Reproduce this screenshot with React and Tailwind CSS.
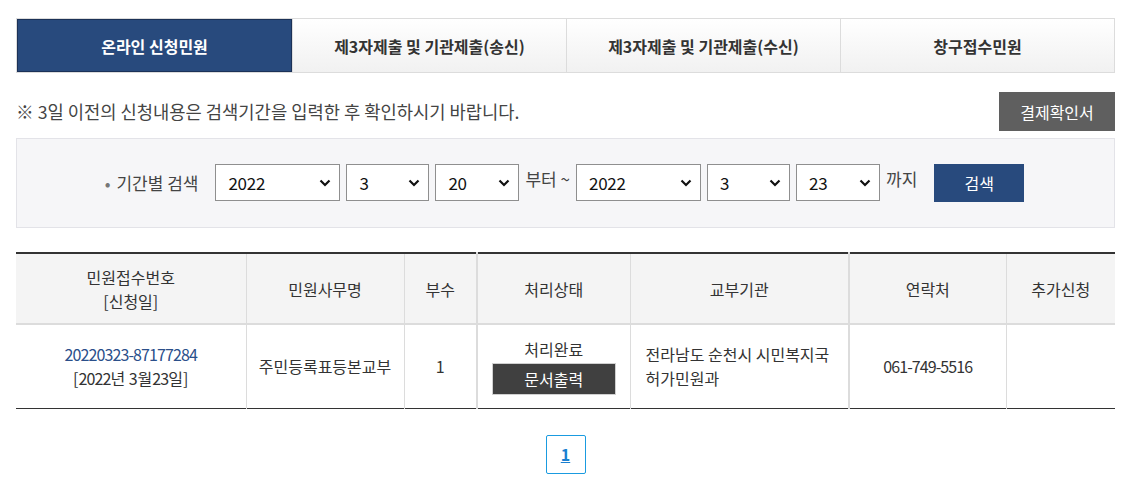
import { useState } from 'react';

const font = { fontFamily: '"Noto Sans CJK KR", "Noto Sans", sans-serif' };

const tabs = ['온라인 신청민원', '제3자제출 및 기관제출(송신)', '제3자제출 및 기관제출(수신)', '창구접수민원'];

const Chevron = () => (
  <svg className="pointer-events-none absolute right-[9px] top-1/2 -translate-y-1/2" width="12" height="8" viewBox="0 0 12 8">
    <path d="M1.5 1.5 L6 6 L10.5 1.5" fill="none" stroke="#111" strokeWidth="2.2" />
  </svg>
);

const DateSelect = ({ value, options, width }) => (
  <div className={`relative ${width}`}>
    <select
      defaultValue={value}
      className="h-[37px] w-full appearance-none border border-[#8f8f8f] bg-white pl-[12px] text-[17px] tracking-[-0.3px] text-[#111] outline-none"
    >
      {options.map((o) => (
        <option key={o}>{o}</option>
      ))}
    </select>
    <Chevron />
  </div>
);

const years = ['2020', '2021', '2022'];
const months = Array.from({ length: 12 }, (_, i) => String(i + 1));
const days = Array.from({ length: 31 }, (_, i) => String(i + 1));

export default function App() {
  const [active, setActive] = useState(0);

  return (
    <div className="min-h-[502px] w-[1141px] bg-white text-[#333]" style={font}>
      <div className="pl-[16px] pr-[26px] pt-[18px]">
        {/* Tabs */}
        <div className="flex h-[55px] border border-[#dcdcdc]">
          {tabs.map((t, i) => (
            <button
              key={t}
              onClick={() => setActive(i)}
              className={
                i === active
                  ? 'flex-1 border border-[#1b3157] bg-[#284a7d] text-[16px] font-bold text-white'
                  : 'flex-1 border-l border-[#dcdcdc] bg-gradient-to-b from-white to-[#f1f1f1] text-[16px] font-bold text-[#333]'
              }
            >
              {t}
            </button>
          ))}
        </div>

        {/* Notice */}
        <div className="mt-[19px] flex items-center justify-between">
          <p className="text-[17.7px] text-[#444]">※ 3일 이전의 신청내용은 검색기간을 입력한 후 확인하시기 바랍니다.</p>
          <button className="h-[39px] w-[116px] bg-[#5f5f5f] text-[16px] text-white">결제확인서</button>
        </div>

        {/* Search box */}
        <div className="mt-[7px] flex h-[90px] items-center justify-center border border-[#e3e3e8] bg-[#f6f6f8] pr-[2px]">
          <span className="mr-[17px] text-[17px] text-[#444]">
            <span className="mr-[6px] text-[#777]">•</span>기간별 검색
          </span>
          <div className="flex items-start gap-[6px]">
            <DateSelect value="2022" options={years} width="w-[125px]" />
            <DateSelect value="3" options={months} width="w-[83px]" />
            <DateSelect value="20" options={days} width="w-[84px]" />
            <span className="text-[17px] leading-[30px] text-[#444]">부터 ~</span>
            <DateSelect value="2022" options={years} width="w-[125px]" />
            <DateSelect value="3" options={months} width="w-[83px]" />
            <DateSelect value="23" options={days} width="w-[84px]" />
            <span className="text-[17px] leading-[30px] text-[#444]">까지</span>
            <button className="ml-[11px] h-[38px] w-[90px] bg-[#284a7d] text-[16px] text-white">검색</button>
          </div>
        </div>

        {/* Table */}
        <table className="mt-[24px] w-full border-collapse border-t-2 border-b border-t-[#333] border-b-[#333] text-[16px]">
          <thead>
            <tr className="h-[71px] border-b-2 border-[#dcdcdc] bg-[#f4f4f4]">
              <th className="w-[230px] font-normal leading-[24px]">
                민원접수번호
                <br />
                [신청일]
              </th>
              <th className="w-[158px] border-l border-[#dcdcdc] font-normal">민원사무명</th>
              <th className="w-[73px] border-l border-[#dcdcdc] font-normal">부수</th>
              <th className="w-[153px] border-l-2 border-[#dcdcdc] font-normal">처리상태</th>
              <th className="w-[219px] border-l border-[#dcdcdc] font-normal">교부기관</th>
              <th className="w-[157px] border-l-2 border-[#dcdcdc] font-normal">연락처</th>
              <th className="border-l border-[#dcdcdc] font-normal">추가신청</th>
            </tr>
          </thead>
          <tbody>
            <tr className="h-[84px]">
              <td className="text-center leading-[24px]">
                <a className="tracking-[-0.9px] text-[#2b4f8a]">20220323-87177284</a>
                <br />
                [<span className="tracking-[-0.9px]">2022</span>년 3월<span className="tracking-[-0.9px]">23</span>일]
              </td>
              <td className="border-l border-[#dcdcdc] text-center">주민등록표등본교부</td>
              <td className="border-l border-[#dcdcdc] text-center">1</td>
              <td className="border-l-2 border-[#dcdcdc] text-center">
                <div className="leading-[22px]">처리완료</div>
                <button className="mt-[3px] h-[32px] w-[124px] border border-[#d0d0d0] bg-[#404040] text-white">문서출력</button>
              </td>
              <td className="border-l border-[#dcdcdc] pl-[15px] text-left leading-[24px]">
                전라남도 순천시 시민복지국
                <br />
                허가민원과
              </td>
              <td className="border-l-2 border-[#dcdcdc] text-center tracking-[-0.9px]">061-749-5516</td>
              <td className="border-l border-[#dcdcdc]"></td>
            </tr>
          </tbody>
        </table>

        {/* Pagination */}
        <div className="mt-[26px] flex justify-center">
          <a className="flex h-[39px] w-[40px] items-center justify-center rounded-[2px] border border-[#1a9be0] text-[16px] font-bold text-[#1a7fd0] underline">
            1
          </a>
        </div>
      </div>
    </div>
  );
}
